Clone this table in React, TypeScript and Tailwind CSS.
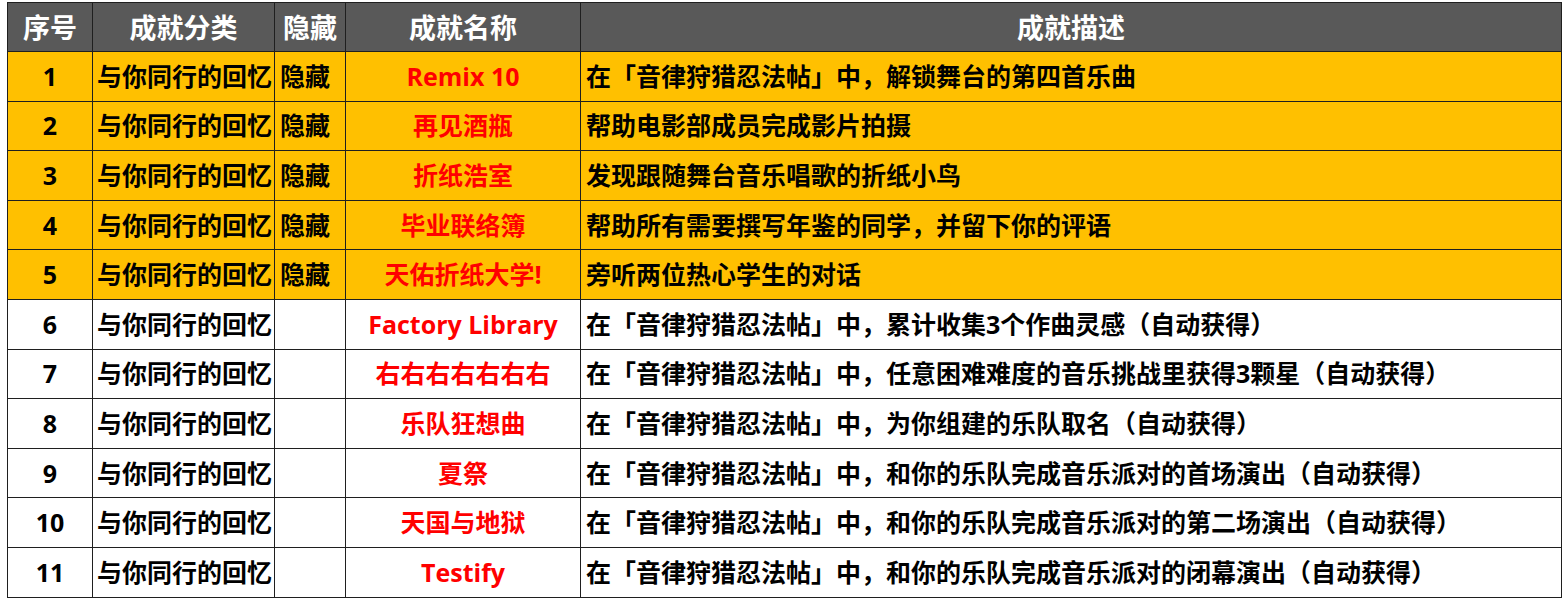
const rows = [
  { no: 1, hidden: true, name: "Remix 10", desc: "在「音律狩猎忍法帖」中，解锁舞台的第四首乐曲" },
  { no: 2, hidden: true, name: "再见酒瓶", desc: "帮助电影部成员完成影片拍摄" },
  { no: 3, hidden: true, name: "折纸浩室", desc: "发现跟随舞台音乐唱歌的折纸小鸟" },
  { no: 4, hidden: true, name: "毕业联络簿", desc: "帮助所有需要撰写年鉴的同学，并留下你的评语" },
  { no: 5, hidden: true, name: "天佑折纸大学!", desc: "旁听两位热心学生的对话" },
  { no: 6, hidden: false, name: "Factory Library", desc: "在「音律狩猎忍法帖」中，累计收集3个作曲灵感（自动获得）" },
  { no: 7, hidden: false, name: "右右右右右右右", desc: "在「音律狩猎忍法帖」中，任意困难难度的音乐挑战里获得3颗星（自动获得）" },
  { no: 8, hidden: false, name: "乐队狂想曲", desc: "在「音律狩猎忍法帖」中，为你组建的乐队取名（自动获得）" },
  { no: 9, hidden: false, name: "夏祭", desc: "在「音律狩猎忍法帖」中，和你的乐队完成音乐派对的首场演出（自动获得）" },
  { no: 10, hidden: false, name: "天国与地狱", desc: "在「音律狩猎忍法帖」中，和你的乐队完成音乐派对的第二场演出（自动获得）" },
  { no: 11, hidden: false, name: "Testify", desc: "在「音律狩猎忍法帖」中，和你的乐队完成音乐派对的闭幕演出（自动获得）" },
];

const font = {
  fontFamily: '"Open Sans", "Noto Sans CJK SC", sans-serif',
};

export default function App() {
  return (
    <div className="min-h-[600px] w-[1567px] bg-white pl-[7px] pt-[2px]" style={font}>
      <table className="w-[1555px] table-fixed border-collapse font-bold">
        <colgroup>
          <col className="w-[85px]" />
          <col className="w-[182px]" />
          <col className="w-[71px]" />
          <col className="w-[235px]" />
          <col />
        </colgroup>
        <thead>
          <tr className="h-[49px] bg-[#595959] text-[27px] leading-none text-white">
            <th className="border border-[#1f1f1f] text-center">序号</th>
            <th className="border border-[#1f1f1f] text-center">成就分类</th>
            <th className="border border-[#1f1f1f] text-center">隐藏</th>
            <th className="border border-[#1f1f1f] text-center">成就名称</th>
            <th className="border border-[#1f1f1f] text-center">成就描述</th>
          </tr>
        </thead>
        <tbody>
          {rows.map((r) => (
            <tr
              key={r.no}
              className={`h-[49.6px] text-[25px] leading-none text-black ${
                r.hidden ? "bg-[#ffc000]" : "bg-white"
              }`}
            >
              <td className="border border-[#1f1f1f] text-center">{r.no}</td>
              <td className="whitespace-nowrap border border-[#1f1f1f] pl-[4px] text-left">与你同行的回忆</td>
              <td className="whitespace-nowrap border border-[#1f1f1f] pl-[5px] text-left">{r.hidden ? "隐藏" : ""}</td>
              <td className="whitespace-nowrap border border-[#1f1f1f] text-center text-[#ff0000]">{r.name}</td>
              <td className="whitespace-nowrap border border-[#1f1f1f] pl-[5px] text-left">{r.desc}</td>
            </tr>
          ))}
        </tbody>
      </table>
    </div>
  );
}
